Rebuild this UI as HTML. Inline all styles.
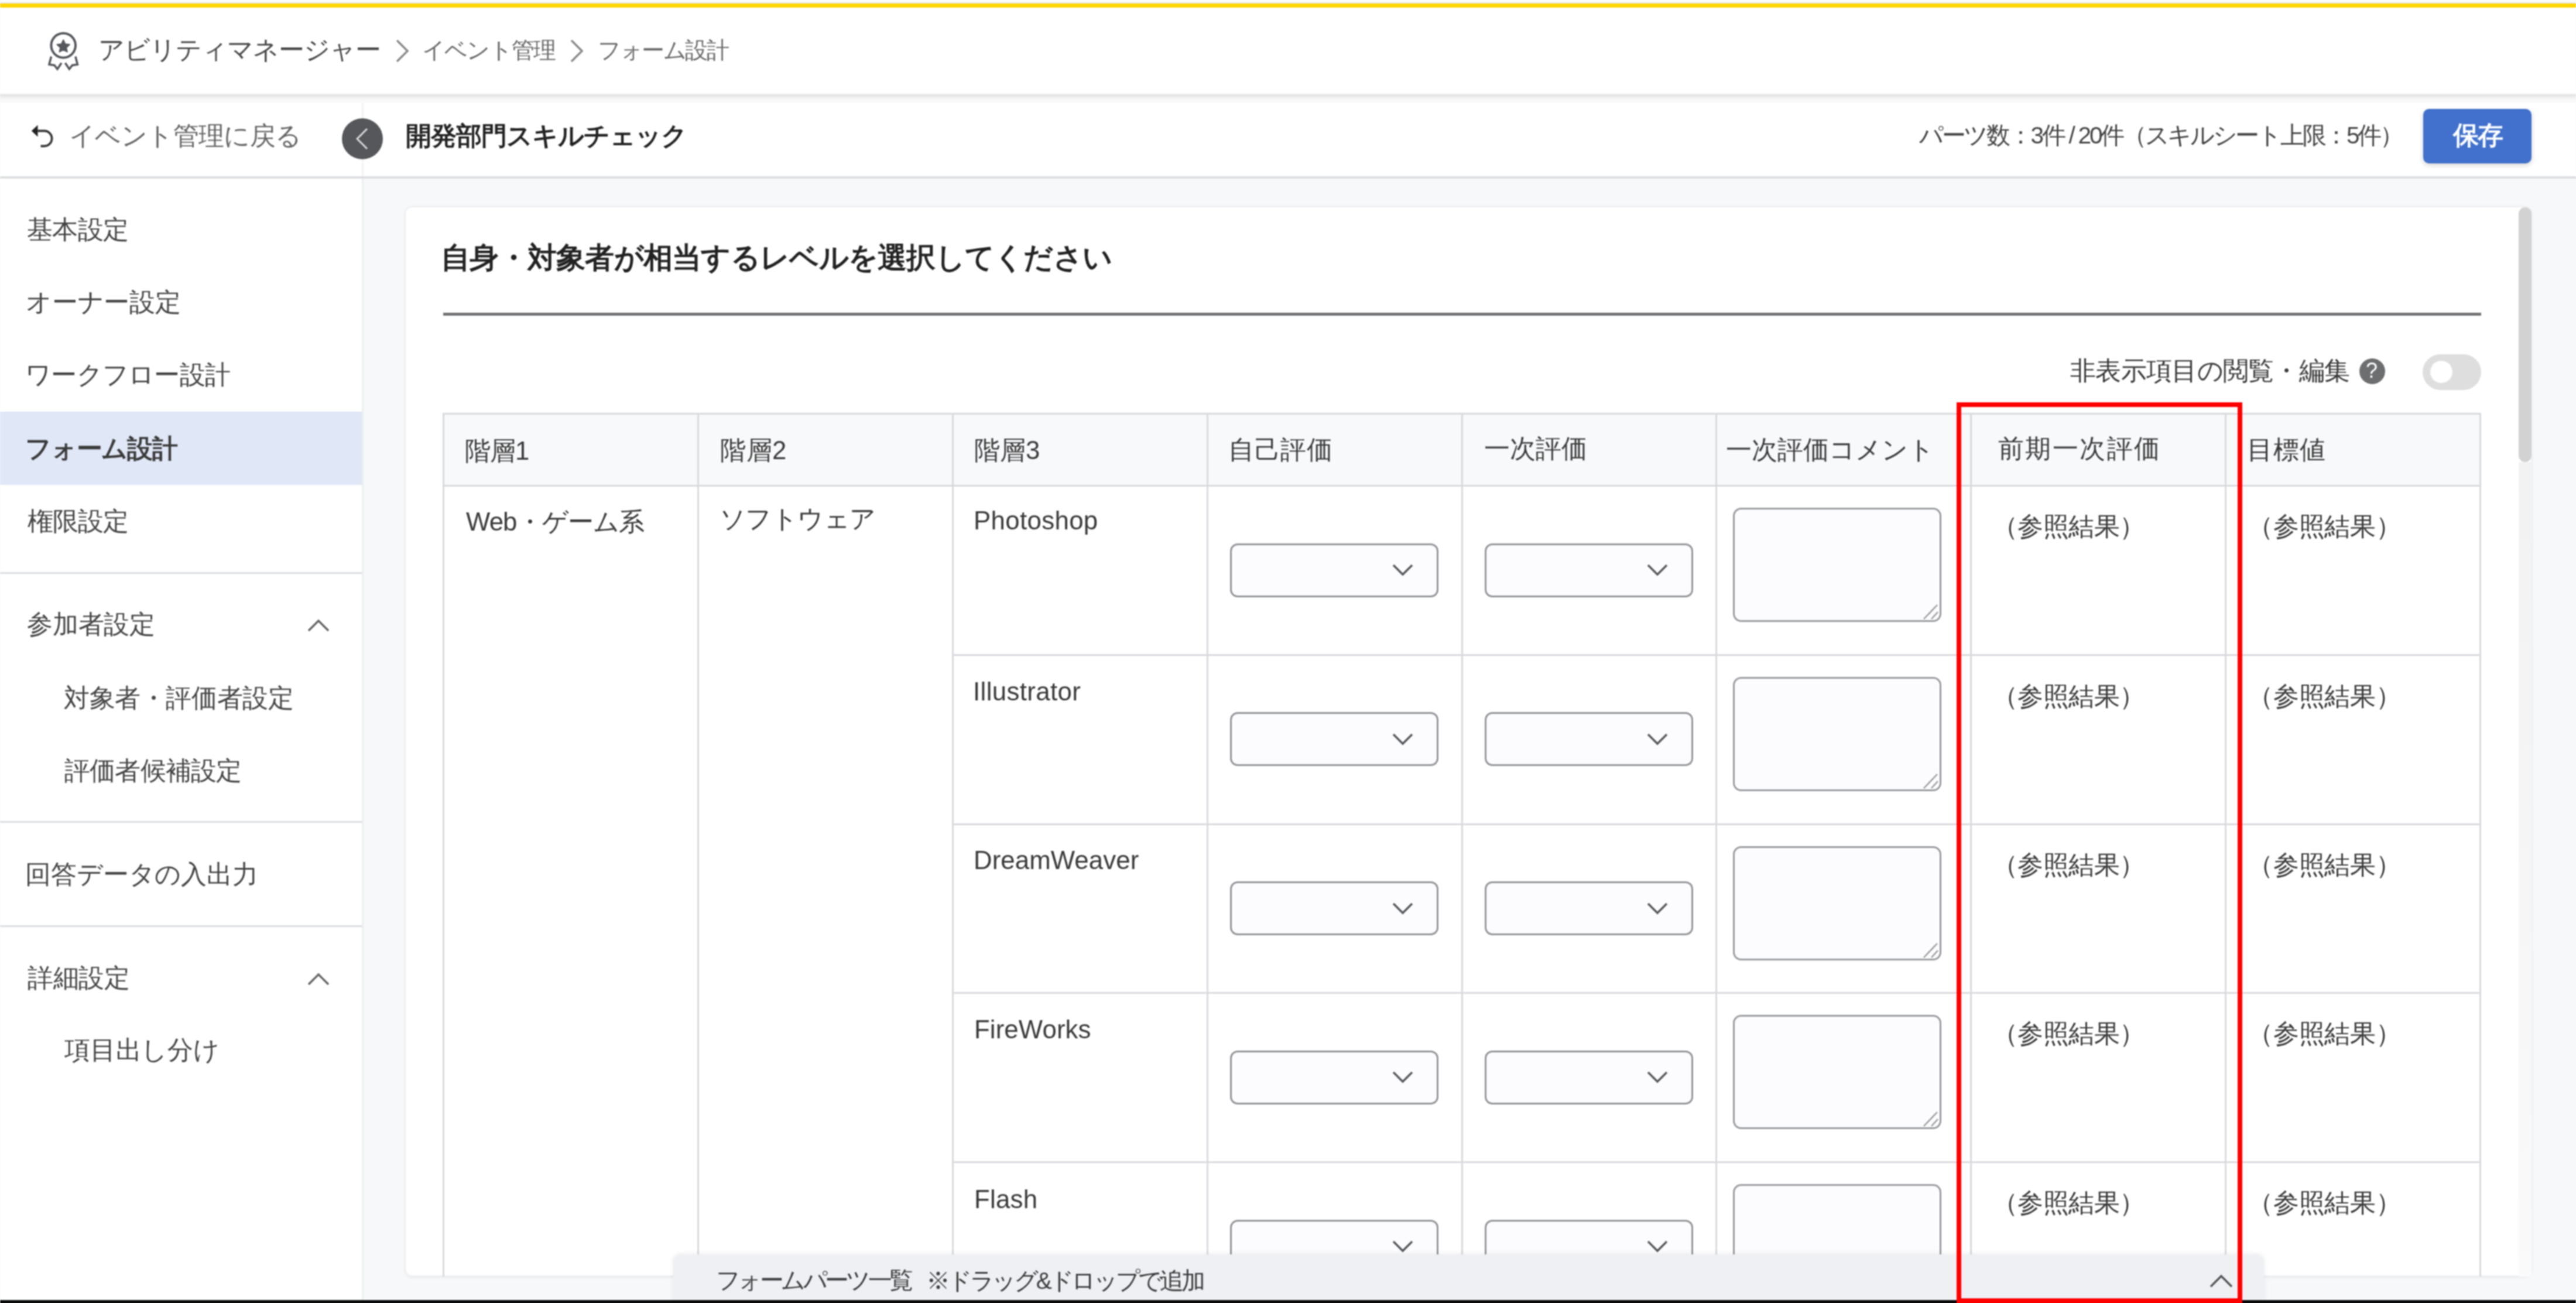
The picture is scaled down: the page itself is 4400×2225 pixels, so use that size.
<!DOCTYPE html>
<html><head><meta charset="utf-8">
<style>
*{box-sizing:border-box;margin:0;padding:0}
html,body{width:4400px;height:2225px;overflow:hidden;background:#f7f8fa;font-family:"Liberation Sans",sans-serif;color:#444}
.a{position:absolute}
.t{position:absolute;white-space:nowrap;line-height:1;font-size:43.75px}
#topstrip{left:0;top:0;width:4400px;height:6px;background:linear-gradient(#fdfdfd 0,#fbfbfb 50%,#e2e2e2 100%)}
#yellow{left:0;top:6px;width:4400px;height:7px;background:#ffd600}
#header{left:0;top:13px;width:4400px;height:149px;background:#fff}
#hshadow{left:0;top:160px;width:4400px;height:16px;background:linear-gradient(#ebebeb 0,#e4e4e4 20%,#f5f5f5 50%,#fcfcfc 100%)}
#bar2{left:0;top:176px;width:4400px;height:125px;background:#fff}
#bar2b{left:0;top:301px;width:4400px;height:4px;background:#dcdee1}
#side{left:0;top:305px;width:618px;height:1913px;background:#fff}
#sideb{left:618px;top:176px;width:3px;height:125px;background:#f4f4f5}
#sideb2{left:618px;top:305px;width:3px;height:1915px;background:#eceef1}
#bottomline{left:0;top:2220px;width:4400px;height:30px;background:#0a0a0a}
#card{left:691px;top:352px;width:3634px;height:1828px;background:#fff;border:2px solid #eceef1;border-radius:13px;box-shadow:0 2px 5px rgba(0,0,0,0.05)}
.sel{position:absolute;width:356px;height:92px;border:3px solid #939599;border-radius:13px;background:#fcfcfe}
.ta{position:absolute;width:356px;height:195px;border:3px solid #9a9ca0;border-radius:14px;background:#fcfcfe}
.vl{position:absolute;width:3px;background:#d9dadd}
.hl{position:absolute;height:3px;background:#d9dadd}
</style></head>
<body><div style="position:absolute;left:0;top:0;width:4400px;height:2250px;filter:blur(0.8px)">
<div class="a" id="topstrip"></div>
<div class="a" id="yellow"></div>
<div class="a" id="header"></div>
<div class="a" id="hshadow"></div>
<div class="a" id="bar2"></div>
<div class="a" id="bar2b"></div>
<div class="a" id="side"></div>
<div class="a" id="sideb"></div>
<div class="a" id="sideb2"></div>

<!-- header content -->
<svg class="a" style="left:80px;top:50px" width="60" height="74" viewBox="80 50 60 74">
  <circle cx="108.2" cy="77.6" r="20.8" fill="none" stroke="#54575c" stroke-width="4"/>
  <path d="M108.2 68.5 L111.3 75.3 L118.7 76.1 L113.1 81.1 L114.7 88.4 L108.2 84.7 L101.7 88.4 L103.3 81.1 L97.7 76.1 L105.1 75.3 Z" fill="#54575c" stroke="#54575c" stroke-width="2.2" stroke-linejoin="round"/>
  <path d="M87.5 96.5 L84 110 L93 111.5 L98 118 L105 107.5" fill="none" stroke="#54575c" stroke-width="3.6" stroke-linejoin="miter"/>
  <path d="M128.9 96.5 L132.4 110 L123.4 111.5 L118.4 118 L111.4 107.5" fill="none" stroke="#54575c" stroke-width="3.6" stroke-linejoin="miter"/>
</svg>
<div class="t" id="bc1" style="left:168.0px;top:63.0px;color:#4a4a4a;letter-spacing:-1.00px">アビリティマネージャー</div>
<svg class="a" style="left:670px;top:64px" width="34" height="46"><path d="M8 5 L26 23 L8 41" fill="none" stroke="#8a8a8a" stroke-width="3.5"/></svg>
<div class="t" id="bc2" style="left:721.0px;top:65.5px;color:#6a6a6a;font-size:39px;letter-spacing:-1.80px">イベント管理</div>
<svg class="a" style="left:968px;top:64px" width="34" height="46"><path d="M8 5 L26 23 L8 41" fill="none" stroke="#8a8a8a" stroke-width="3.5"/></svg>
<div class="t" id="bc3" style="left:1021.0px;top:66.0px;color:#6a6a6a;font-size:39px;letter-spacing:-2.40px">フォーム設計</div>

<!-- bar2 content -->
<svg class="a" style="left:40px;top:200px" width="60" height="64" viewBox="40 200 60 64">
  <path d="M53.8 223.5 L64.5 213.6 L64.5 233.4 Z" fill="#222"/>
  <path d="M63 223.5 L75.6 223.5 A13 13 0 0 1 75.6 249.5 L69.5 249.5" fill="none" stroke="#3a3a3a" stroke-width="3.8"/>
</svg>
<div class="t" id="back" style="left:118.0px;top:210.0px;color:#666;letter-spacing:-0.62px">イベント管理に戻る</div>
<div class="a" style="left:584px;top:202px;width:70px;height:70px;border-radius:50%;background:#55575b"></div>
<svg class="a" style="left:600px;top:212px" width="40" height="50"><path d="M27 8 L10 25 L27 42" fill="none" stroke="#d8d8d8" stroke-width="3"/></svg>
<div class="t" id="title" style="left:693.0px;top:210.0px;color:#222;font-weight:bold;letter-spacing:-1.00px">開発部門スキルチェック</div>
<div class="t" id="parts" style="left:3278.0px;top:210.5px;color:#444;font-size:40.6px;letter-spacing:-3.28px">パーツ数：3件 / 20件（スキルシート上限：5件）</div>
<div class="a" style="left:4139px;top:186px;width:185px;height:93px;border-radius:10px;background:#4171cd;box-shadow:0 3px 8px rgba(0,0,0,0.18)"></div>
<div class="t" id="save" style="left:4190.0px;top:209.0px;color:#fff;font-weight:bold;letter-spacing:-2.00px">保存</div>

<!-- sidebar -->
<div class="a" style="left:0;top:703px;width:618px;height:125px;background:#e0e7f6"></div>
<div class="t" id="s1" style="left:46.0px;top:370.0px;letter-spacing:-0.67px">基本設定</div>
<div class="t" id="s2" style="left:44.0px;top:494.0px;letter-spacing:-0.20px">オーナー設定</div>
<div class="t" id="s3" style="left:43.0px;top:618.0px;letter-spacing:-0.71px">ワークフロー設計</div>
<div class="t" id="s4" style="left:43.0px;top:744.0px;font-weight:bold;color:#3a3a3a;letter-spacing:-1.20px">フォーム設計</div>
<div class="t" id="s5" style="left:47.0px;top:868.0px;letter-spacing:-1.00px">権限設定</div>
<div class="a" style="left:0;top:977px;width:618px;height:3px;background:#dcdee1"></div>
<div class="t" id="s6" style="left:46.0px;top:1044.0px;letter-spacing:-0.25px">参加者設定</div>
<svg class="a" style="left:520px;top:1050px" width="48" height="34"><path d="M7 27 L24 10 L41 27" fill="none" stroke="#666" stroke-width="3.5"/></svg>
<div class="t" id="s7" style="left:109.0px;top:1170.0px;letter-spacing:-0.38px">対象者・評価者設定</div>
<div class="t" id="s8" style="left:110.0px;top:1294.0px;letter-spacing:-0.83px">評価者候補設定</div>
<div class="a" style="left:0;top:1402px;width:618px;height:3px;background:#dcdee1"></div>
<div class="t" id="s9" style="left:43.0px;top:1471.0px;letter-spacing:-0.12px">回答データの入出力</div>
<div class="a" style="left:0;top:1580px;width:618px;height:3px;background:#dcdee1"></div>
<div class="t" id="s10" style="left:47.0px;top:1648.0px;letter-spacing:-0.33px">詳細設定</div>
<svg class="a" style="left:520px;top:1654px" width="48" height="34"><path d="M7 27 L24 10 L41 27" fill="none" stroke="#666" stroke-width="3.5"/></svg>
<div class="t" id="s11" style="left:110.0px;top:1771.0px;letter-spacing:-0.20px">項目出し分け</div>

<!-- card -->
<div class="a" id="card"></div>
<div class="t" id="ctitle" style="left:753.0px;top:415.0px;color:#222;font-weight:bold;font-size:50px;letter-spacing:-0.73px">自身・対象者が相当するレベルを選択してください</div>
<div class="a" style="left:757px;top:534px;width:3481px;height:5px;background:#707274"></div>
<div class="t" id="hid" style="left:3536.0px;top:611.0px;color:#3a3a3a;letter-spacing:-0.70px">非表示項目の閲覧・編集</div>
<div class="a" style="left:4030px;top:612px;width:44px;height:44px;border-radius:50%;background:#6d6e70"></div>
<div class="t" id="qm" style="left:4041px;top:615px;color:#fff;font-size:36px">?</div>
<div class="a" style="left:4138px;top:605px;width:100px;height:61px;border-radius:31px;background:#dedede"></div>
<div class="a" style="left:4151px;top:616px;width:38px;height:38px;border-radius:50%;background:#fff"></div>
<div class="a" style="left:757px;top:706px;width:3480px;height:124px;background:#f8f9fb"></div>
<div class="hl" style="left:757px;top:705px;width:3481px"></div>
<div class="hl" style="left:757px;top:828px;width:3481px"></div>
<div class="hl" style="left:1626px;top:1116.8px;width:2611px"></div>
<div class="hl" style="left:1626px;top:1405.5px;width:2611px"></div>
<div class="hl" style="left:1626px;top:1694.2px;width:2611px"></div>
<div class="hl" style="left:1626px;top:1983.0px;width:2611px"></div>
<div class="vl" style="left:756.0px;top:705px;height:1475px"></div>
<div class="vl" style="left:1190.9px;top:705px;height:1475px"></div>
<div class="vl" style="left:1625.8px;top:705px;height:1475px"></div>
<div class="vl" style="left:2060.6px;top:705px;height:1475px"></div>
<div class="vl" style="left:2495.5px;top:705px;height:1475px"></div>
<div class="vl" style="left:2930.4px;top:705px;height:1475px"></div>
<div class="vl" style="left:3365.2px;top:705px;height:1475px"></div>
<div class="vl" style="left:3800.1px;top:705px;height:1475px"></div>
<div class="vl" style="left:4235.0px;top:705px;height:1475px"></div>
<div class="t" id="h0" style="left:794.0px;top:748.0px;color:#3a3a3a;letter-spacing:-1.00px">階層1</div>
<div class="t" id="h1" style="left:1230.0px;top:747.0px;color:#3a3a3a;letter-spacing:0.50px">階層2</div>
<div class="t" id="h2" style="left:1664.0px;top:747.0px;color:#3a3a3a;letter-spacing:0.00px">階層3</div>
<div class="t" id="h3" style="left:2098.0px;top:746.0px;color:#3a3a3a;letter-spacing:0.67px">自己評価</div>
<div class="t" id="h4" style="left:2535.0px;top:744.0px;color:#3a3a3a;letter-spacing:0.00px">一次評価</div>
<div class="t" id="h5" style="left:2948.0px;top:746.0px;color:#3a3a3a;letter-spacing:0.00px">一次評価コメント</div>
<div class="t" id="h6" style="left:3413.0px;top:744.0px;color:#3a3a3a;letter-spacing:2.40px">前期一次評価</div>
<div class="t" id="h7" style="left:3838.0px;top:746.0px;color:#3a3a3a;letter-spacing:1.00px">目標値</div>
<div class="t" id="b1" style="left:796.0px;top:869.0px;color:#3a3a3a;letter-spacing:-0.86px">Web・ゲーム系</div>
<div class="t" id="b2" style="left:1229.0px;top:864.0px;color:#3a3a3a;letter-spacing:-0.60px">ソフトウェア</div>
<div class="t" id="n0" style="left:1663.0px;top:867.0px;color:#3a3a3a;letter-spacing:0.37px">Photoshop</div>
<div class="sel" style="left:2100.5px;top:927.5px"></div>
<svg class="a" style="left:2374.5px;top:960.0px" width="42" height="28"><path d="M5 5 L21 21 L37 5" fill="none" stroke="#55585c" stroke-width="3.6"/></svg>
<div class="sel" style="left:2535.5px;top:927.5px"></div>
<svg class="a" style="left:2809.5px;top:960.0px" width="42" height="28"><path d="M5 5 L21 21 L37 5" fill="none" stroke="#55585c" stroke-width="3.6"/></svg>
<div class="ta" style="left:2960px;top:867.0px"></div>
<svg class="a" style="left:3283px;top:1030.0px" width="30" height="30"><path d="M3 27 L26 3 M16 27 L27 15" fill="none" stroke="#9a9a9a" stroke-width="2.5"/></svg>
<div class="t" id="r0a" style="left:3403.0px;top:877.0px;color:#3a3a3a;letter-spacing:-0.60px">（参照結果）</div>
<div class="t" id="r0b" style="left:3839.0px;top:877.0px;color:#3a3a3a;letter-spacing:-0.20px">（参照結果）</div>
<div class="t" id="n1" style="left:1662.0px;top:1158.8px;color:#3a3a3a;letter-spacing:0.40px">Illustrator</div>
<div class="sel" style="left:2100.5px;top:1216.2px"></div>
<svg class="a" style="left:2374.5px;top:1248.8px" width="42" height="28"><path d="M5 5 L21 21 L37 5" fill="none" stroke="#55585c" stroke-width="3.6"/></svg>
<div class="sel" style="left:2535.5px;top:1216.2px"></div>
<svg class="a" style="left:2809.5px;top:1248.8px" width="42" height="28"><path d="M5 5 L21 21 L37 5" fill="none" stroke="#55585c" stroke-width="3.6"/></svg>
<div class="ta" style="left:2960px;top:1155.8px"></div>
<svg class="a" style="left:3283px;top:1318.8px" width="30" height="30"><path d="M3 27 L26 3 M16 27 L27 15" fill="none" stroke="#9a9a9a" stroke-width="2.5"/></svg>
<div class="t" id="r1a" style="left:3403.0px;top:1166.8px;color:#3a3a3a;letter-spacing:-0.60px">（参照結果）</div>
<div class="t" id="r1b" style="left:3839.0px;top:1166.8px;color:#3a3a3a;letter-spacing:-0.20px">（参照結果）</div>
<div class="t" id="n2" style="left:1663.0px;top:1446.5px;color:#3a3a3a;letter-spacing:0.10px">DreamWeaver</div>
<div class="sel" style="left:2100.5px;top:1505.0px"></div>
<svg class="a" style="left:2374.5px;top:1537.5px" width="42" height="28"><path d="M5 5 L21 21 L37 5" fill="none" stroke="#55585c" stroke-width="3.6"/></svg>
<div class="sel" style="left:2535.5px;top:1505.0px"></div>
<svg class="a" style="left:2809.5px;top:1537.5px" width="42" height="28"><path d="M5 5 L21 21 L37 5" fill="none" stroke="#55585c" stroke-width="3.6"/></svg>
<div class="ta" style="left:2960px;top:1444.5px"></div>
<svg class="a" style="left:3283px;top:1607.5px" width="30" height="30"><path d="M3 27 L26 3 M16 27 L27 15" fill="none" stroke="#9a9a9a" stroke-width="2.5"/></svg>
<div class="t" id="r2a" style="left:3403.0px;top:1454.5px;color:#3a3a3a;letter-spacing:-0.60px">（参照結果）</div>
<div class="t" id="r2b" style="left:3839.0px;top:1454.5px;color:#3a3a3a;letter-spacing:-0.20px">（参照結果）</div>
<div class="t" id="n3" style="left:1664.0px;top:1736.2px;color:#3a3a3a;letter-spacing:0.12px">FireWorks</div>
<div class="sel" style="left:2100.5px;top:1793.8px"></div>
<svg class="a" style="left:2374.5px;top:1826.2px" width="42" height="28"><path d="M5 5 L21 21 L37 5" fill="none" stroke="#55585c" stroke-width="3.6"/></svg>
<div class="sel" style="left:2535.5px;top:1793.8px"></div>
<svg class="a" style="left:2809.5px;top:1826.2px" width="42" height="28"><path d="M5 5 L21 21 L37 5" fill="none" stroke="#55585c" stroke-width="3.6"/></svg>
<div class="ta" style="left:2960px;top:1733.2px"></div>
<svg class="a" style="left:3283px;top:1896.2px" width="30" height="30"><path d="M3 27 L26 3 M16 27 L27 15" fill="none" stroke="#9a9a9a" stroke-width="2.5"/></svg>
<div class="t" id="r3a" style="left:3403.0px;top:1743.2px;color:#3a3a3a;letter-spacing:-0.60px">（参照結果）</div>
<div class="t" id="r3b" style="left:3839.0px;top:1743.2px;color:#3a3a3a;letter-spacing:-0.20px">（参照結果）</div>
<div class="t" id="n4" style="left:1664.0px;top:2026.0px;color:#3a3a3a;letter-spacing:0.25px">Flash</div>
<div class="sel" style="left:2100.5px;top:2082.5px"></div>
<svg class="a" style="left:2374.5px;top:2115.0px" width="42" height="28"><path d="M5 5 L21 21 L37 5" fill="none" stroke="#55585c" stroke-width="3.6"/></svg>
<div class="sel" style="left:2535.5px;top:2082.5px"></div>
<svg class="a" style="left:2809.5px;top:2115.0px" width="42" height="28"><path d="M5 5 L21 21 L37 5" fill="none" stroke="#55585c" stroke-width="3.6"/></svg>
<div class="ta" style="left:2960px;top:2022.0px"></div>
<svg class="a" style="left:3283px;top:2185.0px" width="30" height="30"><path d="M3 27 L26 3 M16 27 L27 15" fill="none" stroke="#9a9a9a" stroke-width="2.5"/></svg>
<div class="t" id="r4a" style="left:3403.0px;top:2032.0px;color:#3a3a3a;letter-spacing:-0.60px">（参照結果）</div>
<div class="t" id="r4b" style="left:3839.0px;top:2032.0px;color:#3a3a3a;letter-spacing:-0.20px">（参照結果）</div>
<div class="a" style="left:4302px;top:789px;width:22px;height:1391px;background:linear-gradient(#f2f2f2,#fafafa)"></div>
<div class="a" style="left:4302px;top:354px;width:22px;height:435px;border-radius:11px;background:#d2d2d2"></div>

<div class="a" style="left:1150px;top:2142px;width:2717px;height:90px;border-radius:13px 13px 0 0;background:#eef0f4;box-shadow:0 -1px 8px rgba(0,0,0,0.08)"></div>
<div class="t" id="fb" style="left:1223.0px;top:2165.5px;color:#3d3d3d;font-size:40.6px;letter-spacing:-4.62px">フォームパーツ一覧</div>
<div class="t" id="fb2" style="left:1582.0px;top:2167.0px;color:#3d3d3d;font-size:40.6px;letter-spacing:-4.25px">※ドラッグ&amp;ドロップで追加</div>
<svg class="a" style="left:3770px;top:2168px" width="48" height="36"><path d="M6 29 L24 11 L42 29" fill="none" stroke="#555" stroke-width="3.5"/></svg>

<div class="a" id="bottomline"></div>
<div class="a" style="left:3342px;top:687px;width:488px;height:1558px;border:8px solid #ff0000;border-bottom-width:28px"></div>
</div></body></html>
